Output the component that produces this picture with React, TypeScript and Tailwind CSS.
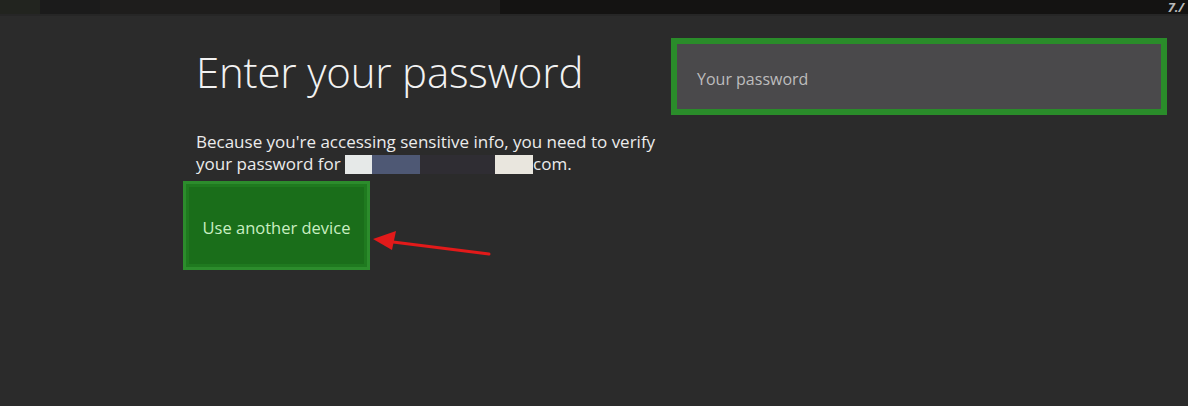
import React from "react";

const font = { fontFamily: '"Open Sans", "Noto Sans", sans-serif' };

export default function App() {
  return (
    <div className="flex h-[406px] w-[1188px] flex-col overflow-hidden bg-[#2b2b2b]" style={font}>
      {/* top strip from the previous screen */}
      <div className="flex h-[14px] shrink-0">
        <div className="w-[40px] bg-[#22241f]" />
        <div className="w-[60px] bg-[#1b1b1b]" />
        <div className="w-[400px] bg-[#1e1d1c]" />
        <div className="flex flex-1 items-center justify-end bg-[#141312] pr-[4px]">
          <span className="text-[13px] font-bold italic leading-[14px] text-[#b9b9b9]">7./</span>
        </div>
      </div>
      <div className="h-[2px] bg-[#262626]" />

      <div className="flex flex-1 pl-[183px] pt-[22px]">
        <div className="w-[488px] shrink-0">
          <h1 className="ml-[13px] mt-[6px] text-[42px] font-light leading-[56px] tracking-[-0.2px] text-[#f2f2f2]">
            Enter your password
          </h1>
          <p className="ml-[13px] mt-[31px] text-[17px] leading-[22px] text-[#ececec]">
            Because you're accessing sensitive info, you need to verify
            <br />
            your password for{" "}
            <span className="inline-block h-[19px] w-[27px] align-[-4px] bg-[#e6e9e8]" />
            <span className="inline-block h-[19px] w-[48px] align-[-4px] bg-[#4e5874]" />
            <span className="inline-block h-[19px] w-[75px] align-[-4px] bg-[#2f2d33]" />
            <span className="inline-block h-[19px] w-[38px] align-[-4px] bg-[#e9e6de]" />
            com.
          </p>
          <div className="relative mt-[6px] flex items-start">
            <button className="flex h-[89px] w-[187px] items-center justify-center border-[3px] border-[#2c8c2c] bg-[#1a6e1a] pt-[5px] shadow-[inset_0_0_0_3px_#1f7a1f]">
              <span className="text-[16.5px] text-[#c9efc2]">Use another device</span>
            </button>
            <svg width="130" height="40" viewBox="0 0 130 40" className="ml-[1px] mt-[47px]">
              <line x1="14" y1="13" x2="118" y2="26" stroke="#e21a1a" strokeWidth="3" strokeLinecap="round" />
              <polygon points="2,11 25,3 21,22" fill="#e21a1a" />
            </svg>
          </div>
        </div>
        <div className="flex h-[77px] w-[496px] items-center border-[6px] border-[#2a8c2a] bg-[#4a494b] pl-[20px] pt-[5px]">
          <span className="text-[16px] text-[#bdbcbd]">Your password</span>
        </div>
      </div>
    </div>
  );
}
